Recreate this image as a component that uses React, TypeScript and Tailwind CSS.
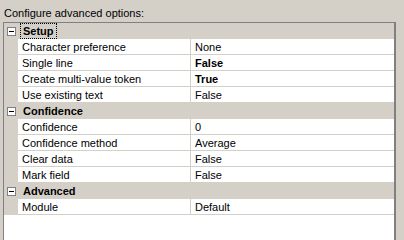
import React from "react";

type Prop = { name: string; value: string; bold?: boolean };
type Cat = { title: string; focused?: boolean; props: Prop[] };

const cats: Cat[] = [
  {
    title: "Setup",
    focused: true,
    props: [
      { name: "Character preference", value: "None" },
      { name: "Single line", value: "False", bold: true },
      { name: "Create multi-value token", value: "True", bold: true },
      { name: "Use existing text", value: "False" },
    ],
  },
  {
    title: "Confidence",
    props: [
      { name: "Confidence", value: "0" },
      { name: "Confidence method", value: "Average" },
      { name: "Clear data", value: "False" },
      { name: "Mark field", value: "False" },
    ],
  },
  {
    title: "Advanced",
    props: [{ name: "Module", value: "Default" }],
  },
];

function Minus() {
  return (
    <div className="w-[9px] h-[9px] border border-[#808080] bg-white flex items-center justify-center">
      <div className="w-[5px] h-[1px] bg-black" />
    </div>
  );
}

export default function App() {
  return (
    <div className="w-[404px] h-[240px] bg-[#d4d0c8] text-black text-[11px] leading-[13px] overflow-hidden font-['Liberation_Sans',Arial,sans-serif]">
      <div className="h-[22px] pl-[4px] pt-[7px]">Configure advanced options:</div>
      <div className="ml-[3px] w-[393px] h-[240px] border-l border-t border-r-2 border-[#808080] bg-white flex flex-col">
        {cats.map((c) => (
          <div key={c.title} className="flex flex-col">
            <div className="h-[16px] bg-[#d4d0c8] flex items-center">
              <div className="w-[14px] flex justify-center pl-[1px]">
                <Minus />
              </div>
              <div
                className={
                  "ml-[2px] h-[16px] px-[2px] flex items-center font-bold border border-dotted " +
                  (c.focused ? "border-black" : "border-transparent")
                }
              >
                {c.title}
              </div>
            </div>
            {c.props.map((p) => (
              <div key={p.name} className="h-[16px] flex">
                <div className="w-[14px] bg-[#d4d0c8]" />
                <div className="w-[173px] border-b border-r border-[#d4d0c8] pl-[4px] pt-[2px]">
                  {p.name}
                </div>
                <div
                  className={
                    "flex-1 border-b border-[#d4d0c8] pl-[4px] pt-[2px] " + (p.bold ? "font-bold" : "")
                  }
                >
                  {p.value}
                </div>
              </div>
            ))}
          </div>
        ))}
      </div>
    </div>
  );
}
